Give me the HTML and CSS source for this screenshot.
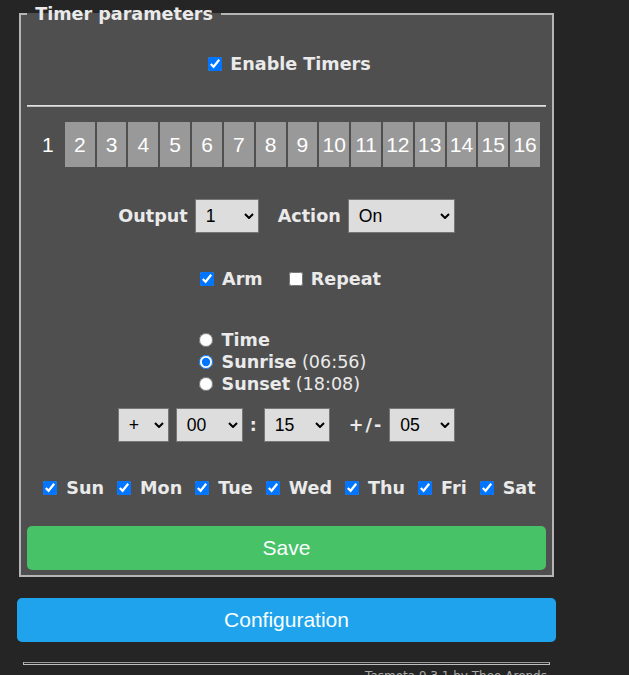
FILE: index.html
```html
<!DOCTYPE html>
<html lang="en">
<head>
<meta charset="utf-8">
<title>Timers</title>
<link rel="stylesheet" href="styles.css">
</head>
<body>
<div class="page">
  <fieldset class="panel">
    <legend class="legend">&nbsp;Timer parameters&nbsp;</legend>
    <div class="row enable-row">
      <label class="check"><input type="checkbox" class="box" checked><b>Enable Timers</b></label>
    </div>
    <hr class="rule">
    <div class="tabs">
      <button class="tab tab-active">1</button>
      <button class="tab">2</button>
      <button class="tab">3</button>
      <button class="tab">4</button>
      <button class="tab">5</button>
      <button class="tab">6</button>
      <button class="tab">7</button>
      <button class="tab">8</button>
      <button class="tab">9</button>
      <button class="tab">10</button>
      <button class="tab">11</button>
      <button class="tab">12</button>
      <button class="tab">13</button>
      <button class="tab">14</button>
      <button class="tab">15</button>
      <button class="tab">16</button>
    </div>
    <div class="row output-row">
      <b class="lbl lbl-output">Output</b>
      <span class="sel sel-output"><select><option>1</option></select><svg class="chev" width="10" height="6" viewBox="0 0 10 6"><path d="M1 1L5 5L9 1" fill="none" stroke="#000" stroke-width="2"/></svg></span>
      <b class="lbl lbl-action">Action</b>
      <span class="sel sel-action"><select><option>On</option></select><svg class="chev" width="10" height="6" viewBox="0 0 10 6"><path d="M1 1L5 5L9 1" fill="none" stroke="#000" stroke-width="2"/></svg></span>
    </div>
    <div class="row arm-row">
      <label class="check arm"><input type="checkbox" class="box" checked><b>Arm</b></label>
      <label class="check"><input type="checkbox" class="box"><b>Repeat</b></label>
    </div>
    <div class="row radio-row">
      <div class="radios">
        <label class="radio"><input type="radio" name="mode" class="dot"><b>Time</b></label>
        <label class="radio"><input type="radio" name="mode" class="dot" checked><span><b>Sunrise</b> (06:56)</span></label>
        <label class="radio"><input type="radio" name="mode" class="dot"><span><b>Sunset</b> (18:08)</span></label>
      </div>
    </div>
    <div class="row time-row">
      <span class="sel sel-sign"><select><option>+</option></select><svg class="chev" width="10" height="6" viewBox="0 0 10 6"><path d="M1 1L5 5L9 1" fill="none" stroke="#000" stroke-width="2"/></svg></span>
      <span class="sel sel-hour"><select><option>00</option></select><svg class="chev" width="10" height="6" viewBox="0 0 10 6"><path d="M1 1L5 5L9 1" fill="none" stroke="#000" stroke-width="2"/></svg></span>
      <b class="colon">:</b>
      <span class="sel sel-min"><select><option>15</option></select><svg class="chev" width="10" height="6" viewBox="0 0 10 6"><path d="M1 1L5 5L9 1" fill="none" stroke="#000" stroke-width="2"/></svg></span>
      <b class="pm">+/-</b>
      <span class="sel sel-win"><select><option>05</option></select><svg class="chev" width="10" height="6" viewBox="0 0 10 6"><path d="M1 1L5 5L9 1" fill="none" stroke="#000" stroke-width="2"/></svg></span>
    </div>
    <div class="row days-row">
      <label class="check day"><input type="checkbox" class="box" checked><b>Sun</b></label>
      <label class="check day"><input type="checkbox" class="box" checked><b>Mon</b></label>
      <label class="check day"><input type="checkbox" class="box" checked><b>Tue</b></label>
      <label class="check day"><input type="checkbox" class="box" checked><b>Wed</b></label>
      <label class="check day"><input type="checkbox" class="box" checked><b>Thu</b></label>
      <label class="check day"><input type="checkbox" class="box" checked><b>Fri</b></label>
      <label class="check day"><input type="checkbox" class="box" checked><b>Sat</b></label>
    </div>
    <button class="btn btn-save">Save</button>
  </fieldset>
  <button class="btn btn-config">Configuration</button>
  <div class="footer">
    <hr class="foot-rule">
    <a class="foot-link" href="#">Tasmota 9.3.1 by Theo Arends</a>
  </div>
</div>
</body>
</html>
```
FILE: styles.css
```css
* {
  box-sizing: border-box;
}

html, body {
  margin: 0;
  padding: 0;
  background: #252525;
}

body {
  font-family: "DejaVu Sans", Verdana, sans-serif;
  font-size: 17.6px;
  color: #eaeaea;
  overflow: hidden;
}

.page {
  width: 539px;
  margin-left: 17px;
  padding-top: 3px;
}

.panel {
  margin: 0 2px;
  padding: 0 6px 5px 6px;
  border: 2px solid #b5b5b5;
  background: #4f4f4f;
  min-width: 0;
}

.legend {
  padding: 0 2px;
  font-weight: bold;
  line-height: 22px;
  color: #eaeaea;
}

.row {
  display: flex;
  justify-content: center;
  align-items: center;
}

b {
  font-weight: bold;
}

.check, .radio {
  display: flex;
  align-items: center;
  line-height: 22px;
}

.box, .dot {
  width: 14px;
  height: 14px;
  margin: 0 9px 0 0;
  flex: none;
}

.enable-row {
  margin-top: 28px;
  height: 22px;
  padding-left: 6px;
}

.rule {
  margin: 30px 0 0 0;
  height: 2px;
  border: 0;
  border-top: 1px solid #e0e0e0;
  border-bottom: 1px solid #bdbdbd;
}

.tabs {
  display: flex;
  width: 509px;
  margin: 14px auto 0;
}

.tab {
  flex: 1 1 0;
  height: 47px;
  padding: 0;
  border: 1px solid #4f4f4f;
  border-radius: 0;
  background: #999999;
  color: #ffffff;
  font-family: "Liberation Sans", Arial, sans-serif;
  font-size: 21px;
  line-height: 45px;
}

.tab-active {
  background: #4f4f4f;
}

.output-row {
  margin-top: 31px;
  height: 34px;
}

.lbl-output {
  margin-right: 7px;
}

.sel-output {
  width: 64px;
  margin-right: 19px;
}

.lbl-action {
  margin-right: 7px;
}

.sel-action {
  width: 107px;
}

.sel {
  position: relative;
  display: block;
  height: 34px;
  flex: none;
}

.sel select {
  -webkit-appearance: none;
  appearance: none;
  display: block;
  width: 100%;
  height: 34px;
  margin: 0;
  padding: 0 0 0 10px;
  border: 1px solid #767676;
  border-radius: 0;
  background: #dddddd;
  color: #000000;
  font-family: "Liberation Sans", Arial, sans-serif;
  font-size: 17.6px;
}

.chev {
  position: absolute;
  right: 5px;
  top: 14px;
  pointer-events: none;
}

.arm-row {
  margin-top: 35px;
  height: 22px;
  padding-left: 8px;
}

.box, .arm .box {
  margin-right: 8px;
}

.arm {
  margin-right: 26px;
}

.radio-row {
  margin-top: 39px;
}

.radios {
  display: flex;
  flex-direction: column;
  align-items: flex-start;
  margin-right: 8px;
}

.radio {
  height: 22px;
}

.radio span {
  font-weight: normal;
}

.time-row {
  margin-top: 13px;
  height: 34px;
}

.sel-sign {
  width: 51px;
  margin-right: 7px;
}

.sel-hour {
  width: 67px;
}

.colon {
  margin: 0 7px 0 7px;
}

.sel-min {
  width: 66px;
  margin-right: 19px;
}

.pm {
  letter-spacing: 2px;
  margin-right: 6px;
}

.sel-win {
  width: 66px;
}

.days-row {
  margin-top: 35px;
  height: 22px;
  padding-left: 6px;
}

.day .box {
  margin-right: 9px;
}

.day + .day {
  margin-left: 13px;
}

.btn {
  display: block;
  width: 100%;
  height: 44px;
  padding: 0;
  border: 0;
  border-radius: 5px;
  color: #faffff;
  font-family: "Liberation Sans", Arial, sans-serif;
  font-size: 21px;
}

.btn-save {
  margin-top: 27px;
  background: #47c266;
}

.btn-config {
  margin-top: 21px;
  background: #1fa3ec;
}

.footer {
  text-align: right;
  font-size: 12px;
  padding-right: 9px;
}

.foot-rule {
  margin: 20px -3px 0 6px;
  height: 3px;
  border: 1px solid #bdbdbd;
  border-top-color: #9a9a9a;
}

.foot-link {
  display: inline-block;
  margin-top: 4px;
  color: #aaaaaa;
  line-height: 14px;
}
```
